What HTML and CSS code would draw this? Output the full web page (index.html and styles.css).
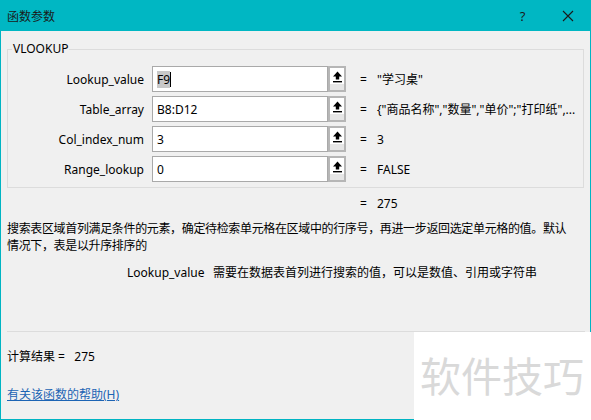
FILE: index.html
```html
<!DOCTYPE html>
<html lang="zh">
<head>
<meta charset="utf-8">
<title>函数参数</title>
<link rel="stylesheet" href="styles.css">
</head>
<body>
<div class="window">
  <div class="titlebar">
    <span class="title">函数参数</span>
    <span class="tb-help">?</span>
    <span class="tb-close">
      <svg width="12" height="12" viewBox="0 0 12 12"><path d="M1 1 L11 11 M11 1 L1 11" stroke="#1a1a1a" stroke-width="1.1" fill="none"/></svg>
    </span>
  </div>
  <div class="content">
    <fieldset class="group">
      <legend>VLOOKUP</legend>
      <div class="row">
        <label class="arg">Lookup_value</label>
        <div class="input"><span class="sel">F9</span><span class="caret"></span></div>
        <span class="pick"><svg width="11" height="12" viewBox="0 0 11 12"><path d="M5.5 0.5 L1 5.5 H3.8 V8.5 H7.2 V5.5 H10 Z" fill="#000"/><rect x="1" y="10" width="9" height="1.4" fill="#000"/></svg></span>
        <span class="eq">=</span>
        <span class="val">"学习桌"</span>
      </div>
      <div class="row">
        <label class="arg">Table_array</label>
        <div class="input">B8:D12</div>
        <span class="pick"><svg width="11" height="12" viewBox="0 0 11 12"><path d="M5.5 0.5 L1 5.5 H3.8 V8.5 H7.2 V5.5 H10 Z" fill="#000"/><rect x="1" y="10" width="9" height="1.4" fill="#000"/></svg></span>
        <span class="eq">=</span>
        <span class="val">{"商品名称","数量","单价";"打印纸",...</span>
      </div>
      <div class="row">
        <label class="arg">Col_index_num</label>
        <div class="input">3</div>
        <span class="pick"><svg width="11" height="12" viewBox="0 0 11 12"><path d="M5.5 0.5 L1 5.5 H3.8 V8.5 H7.2 V5.5 H10 Z" fill="#000"/><rect x="1" y="10" width="9" height="1.4" fill="#000"/></svg></span>
        <span class="eq">=</span>
        <span class="val">3</span>
      </div>
      <div class="row">
        <label class="arg">Range_lookup</label>
        <div class="input">0</div>
        <span class="pick"><svg width="11" height="12" viewBox="0 0 11 12"><path d="M5.5 0.5 L1 5.5 H3.8 V8.5 H7.2 V5.5 H10 Z" fill="#000"/><rect x="1" y="10" width="9" height="1.4" fill="#000"/></svg></span>
        <span class="eq">=</span>
        <span class="val">FALSE</span>
      </div>
    </fieldset>
    <div class="result-line"><span class="eq">=</span><span class="val">275</span></div>
    <p class="desc">搜索表区域首列满足条件的元素，确定待检索单元格在区域中的行序号，再进一步返回选定单元格的值。默认情况下，表是以升序排序的</p>
    <div class="argdesc"><span class="argname">Lookup_value</span><span class="argtext">需要在数据表首列进行搜索的值，可以是数值、引用或字符串</span></div>
  </div>
  <div class="footer">
    <div class="calc">计算结果 =&nbsp;&nbsp;&nbsp;275</div>
    <a class="help" href="#">有关该函数的帮助(H)</a>
  </div>
  <div class="watermark">软件技巧</div>
</div>
</body>
</html>
```

FILE: styles.css
```css
* { box-sizing: border-box; }
html, body { margin: 0; padding: 0; }
body {
  width: 591px;
  height: 420px;
  overflow: hidden;
  background: #f0f0f0;
  font-family: "Noto Sans", "Noto Sans CJK SC", sans-serif;
  font-size: 12px;
  color: #000;
}
.window {
  position: relative;
  width: 591px;
  height: 420px;
  border: 1px solid #00b4c3;
  border-top: none;
  display: flex;
  flex-direction: column;
}
.titlebar {
  height: 31px;
  background: #00b7c3;
  display: flex;
  align-items: center;
  padding-left: 7px;
  margin: 0 -1px;
}
.title {
  font-family: "Noto Sans CJK SC", sans-serif;
  font-size: 12px;
  color: #1a1a1a;
  flex: 1;
}
.tb-help {
  font-size: 13px;
  color: #1a1a1a;
  width: 45px;
  text-align: center;
}
.tb-close {
  width: 46px;
  display: flex;
  justify-content: center;
}
.content {
  padding: 0 6px;
}
.group {
  margin: 10px 0 0 0;
  border: 1px solid #dcdcdc;
  padding: 9px 0 5px 0;
  width: 577px;
}
.group legend {
  margin-left: 4px;
  padding: 0 1px;
  line-height: 16px;
  font-size: 12px;
}
.row {
  display: flex;
  align-items: center;
  height: 26px;
  margin-bottom: 4px;
}
.row:last-child { margin-bottom: 0; }
.arg {
  width: 136px;
  text-align: right;
  margin-right: 8px;
}
.input {
  width: 176px;
  height: 26px;
  border: 1px solid #a9a9a9;
  background: #fff;
  padding-left: 4px;
  display: flex;
  align-items: center;
}
.sel { background: #c8c8c8; }
.caret {
  display: inline-block;
  width: 1px;
  height: 15px;
  background: #000;
}
.pick {
  width: 18px;
  height: 26px;
  border: 2px solid #b6b6b6;
  background: linear-gradient(#fff 0 16px, #e6e6e6 16px);
  display: flex;
  justify-content: center;
  padding-top: 3px;
}
.pick svg { display: block; }
.eq {
  margin-left: 14px;
  width: 17px;
}
.val { white-space: nowrap; }
.result-line {
  display: flex;
  padding-left: 339px;
  margin-top: 8px;
  line-height: 16px;
}
.desc {
  margin: 7px 0 0 0;
  width: 566px;
  line-height: 17px;
  letter-spacing: -0.35px;
  font-family: "Noto Sans CJK SC", sans-serif;
}
.argdesc {
  margin-top: 11px;
  padding-left: 120px;
  display: flex;
  line-height: 17px;
}
.argname { width: 86px; }
.footer {
  margin-top: auto;
  border-top: 1px solid #dcdcdc;
  margin-left: 6px;
  margin-right: 5px;
  height: 88px;
  display: flex;
  flex-direction: column;
}
.calc {
  margin-top: 17px;
  line-height: 16px;
}
.help {
  margin-top: 22px;
  color: #1c64b4;
  text-decoration: underline;
  line-height: 16px;
  align-self: flex-start;
}
.watermark {
  position: absolute;
  left: 413px;
  top: 332px;
  right: -1px;
  bottom: -1px;
  background: #fff;
  color: #d9d9d9;
  font-family: "Noto Sans CJK SC", sans-serif;
  font-size: 41px;
  line-height: 1;
  padding: 22px 0 0 6px;
  letter-spacing: 0;
}
```
